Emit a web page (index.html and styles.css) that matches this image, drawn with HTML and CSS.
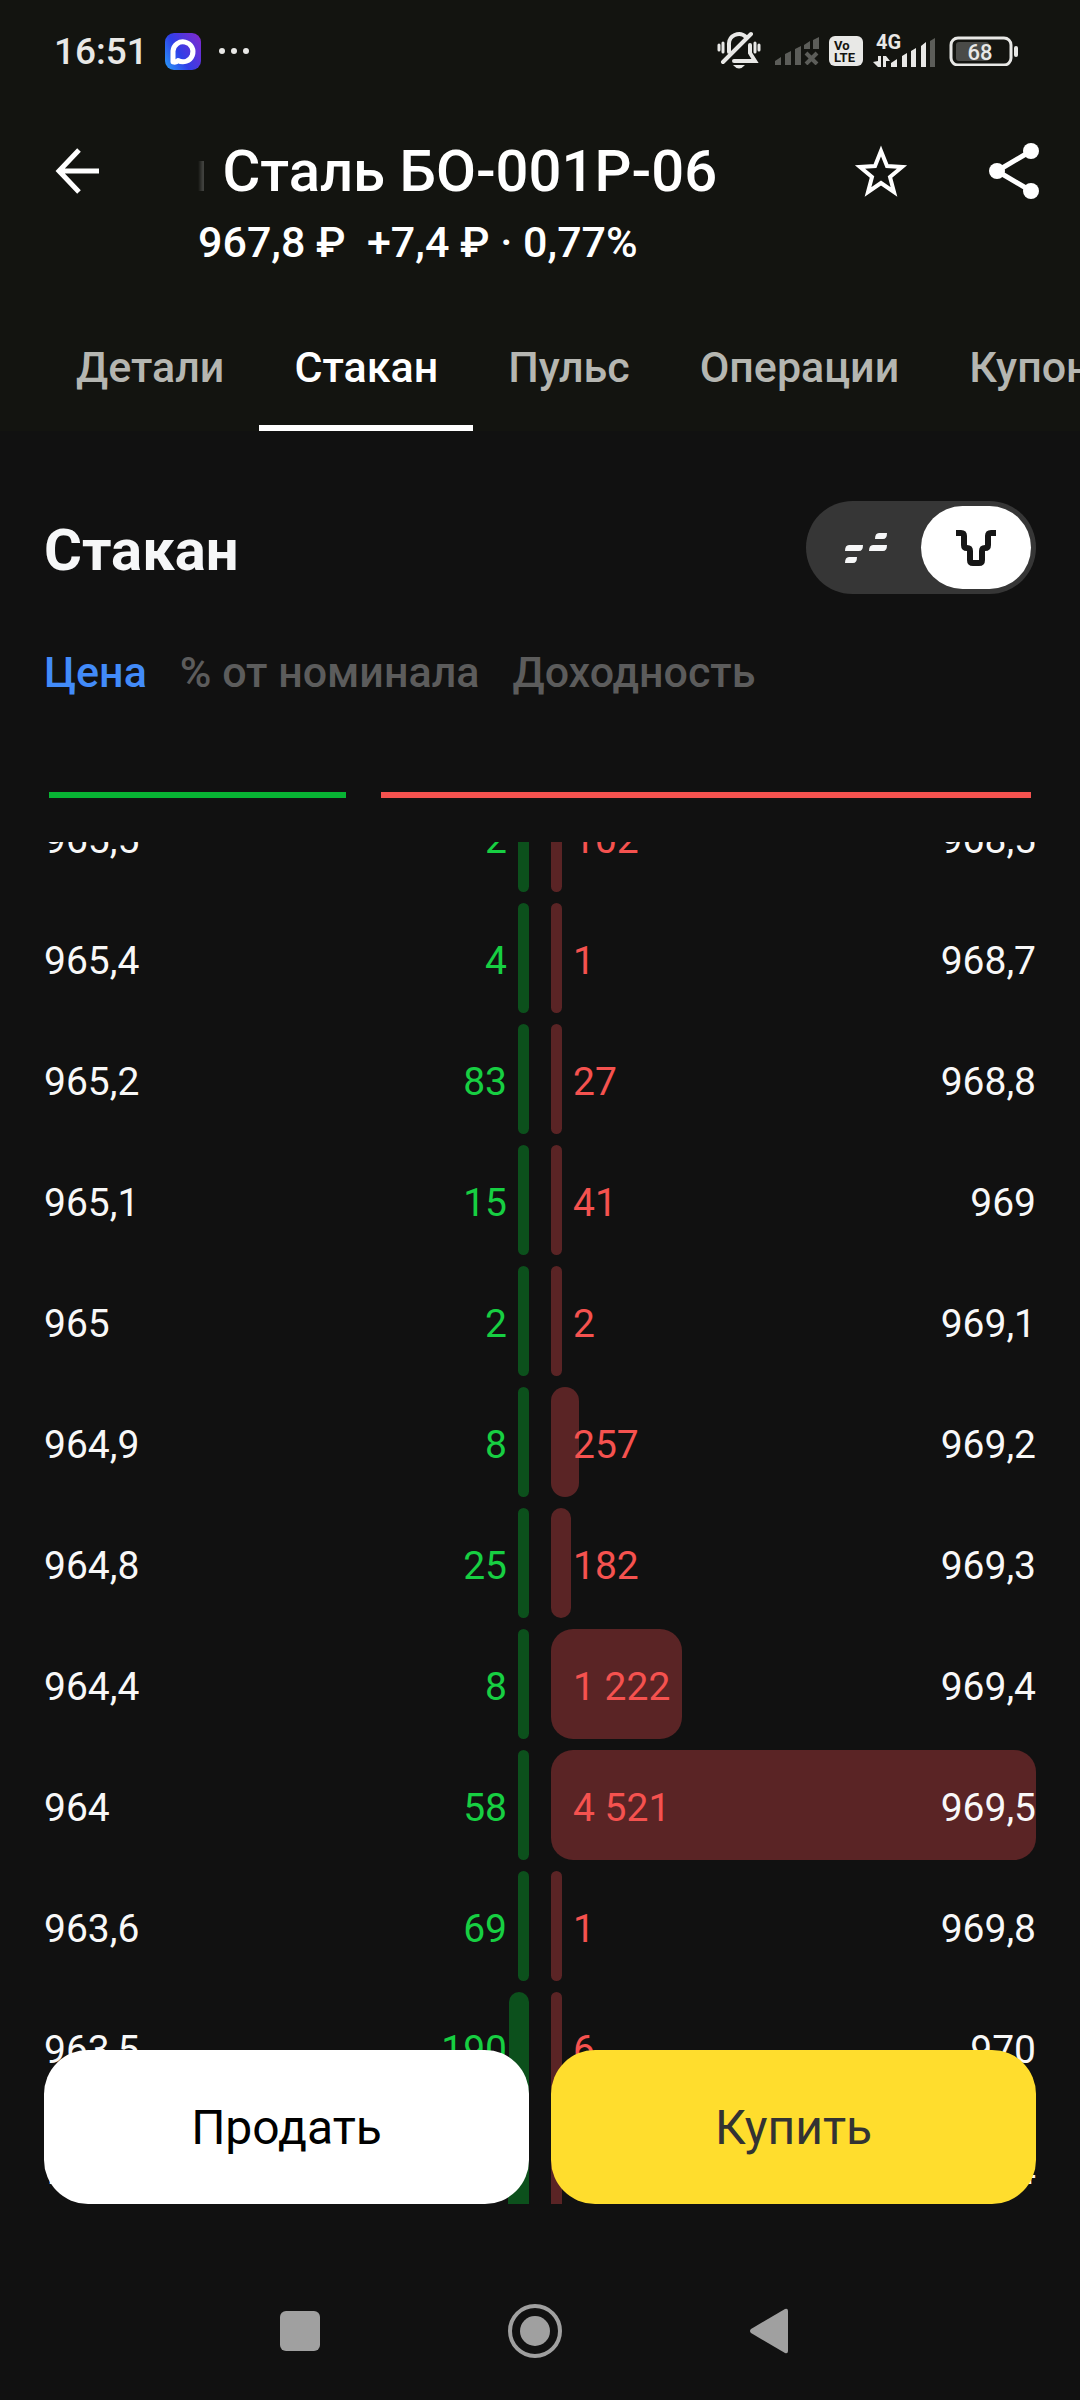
FILE: index.html
```html
<!DOCTYPE html>
<html lang="ru">
<head>
	<meta charset="utf-8">
	<meta name="viewport" content="width=device-width, initial-scale=1.0">
	<title>Стакан</title>
	<link rel="stylesheet" href="styles.css">
</head>
<body>
	<header class="top">
		<div class="status">
			<div class="status-left">
				<span class="clock">16:51</span>
				<svg width="36" height="37" viewBox="0 0 36 37">
					<defs>
						<linearGradient id="app" x1="0" y1="0.8" x2="1" y2="0.2">
							<stop offset="0" stop-color="#2a8df5"/>
							<stop offset="0.4" stop-color="#2f3fe8"/>
							<stop offset="1" stop-color="#7a2bd0"/>
						</linearGradient>
					</defs>
					<rect width="36" height="37" rx="9" fill="url(#app)"/>
					<path d="M8 29V18a10 10 0 1 1 5 9.500q-2 2.500-5 1.500z" fill="none" stroke="#fff" stroke-width="5" stroke-linejoin="round"/>
				</svg>
				<svg width="32" height="8" viewBox="0 0 32 8" fill="#e8e8e6">
					<circle cx="4" cy="4" r="3"/><circle cx="16" cy="4" r="3"/><circle cx="28" cy="4" r="3"/>
				</svg>
			</div>
			<div class="status-right">
				<svg width="44" height="40" viewBox="0 0 44 40" fill="none" stroke="#e8e8e6" stroke-width="4" stroke-linecap="round">
					<path d="M12 21v-7a10 10 0 0 1 17-8M6 31L34 3M17 30h21l-5-8v-8"/>
					<path d="M16 34h12q-6 7-12 0z" fill="#e8e8e6" stroke="none"/>
					<path d="M2 14v5M6 12v9M38 12v9M42 14v5" stroke-width="3"/>
				</svg>
				<div class="signals">
					<svg width="44" height="28" viewBox="0 0 44 28" fill="#5c5d59">
						<path d="M0 28v-4l6-4v8zM10 28V17l6-3v14zM20 28V12l6-3v19zM29 12V8l6-4v8zM38 12V3l6-3v12z"/>
						<path d="M31 16l11 11M42 16L31 27" stroke="#5c5d59" stroke-width="4"/>
					</svg>
					<svg width="34" height="30" viewBox="0 0 34 30">
						<rect width="34" height="30" rx="6" fill="#e8e8e6"/>
						<text class="volte" x="5" y="14">Vo</text>
						<text class="volte" x="5" y="26">LTE</text>
					</svg>
					<svg width="62" height="34" viewBox="0 0 62 34" fill="#e8e8e6">
						<text class="net" x="3" y="15">4G</text>
						<path d="M0 28l5-1v-5h3v11H5zM10 22h3l4 5h-4v6h-3z"/>
						<path d="M18 33v-4l6-4v8zM29 33V22l5-3v14zM38 33V17l5-3v19zM48 33V12l5-4v25z"/>
						<path d="M57 33V7l5-3v29z" fill="#5c5d59"/>
					</svg>
				</div>
				<svg width="69" height="30" viewBox="0 0 69 30">
					<rect x="2" y="2" width="60" height="27" rx="7" fill="none" stroke="#e8e8e6" stroke-width="3"/>
					<rect x="7" y="6" width="33" height="19" rx="3" fill="#4a4b48"/>
					<rect x="65" y="10" width="4" height="11" rx="2" fill="#e8e8e6"/>
					<text class="charge" x="31" y="24" text-anchor="middle">68</text>
				</svg>
			</div>
		</div>

		<div class="appbar">
			<button class="icon-btn" type="button" aria-label="Назад">
				<svg width="44" height="46" viewBox="0 0 44 46" fill="none" stroke="#fff" stroke-width="5">
					<path d="M24 2L4 23l20 21M4 23h40"/>
				</svg>
			</button>
			<div class="name">
				<h1><span class="tail">я</span>&nbsp;Сталь БО-001Р-06</h1>
				<p>967,8 ₽&nbsp; +7,4 ₽ · 0,77%</p>
			</div>
			<button class="icon-btn" type="button" aria-label="В избранное">
				<svg width="54" height="54" viewBox="0 0 54 54" fill="none" stroke="#fff" stroke-width="4">
					<path d="M27 7l6 15 15 1-12 10 4 15-13-9-13 9 4-15L6 23l15-1z"/>
				</svg>
			</button>
			<button class="icon-btn" type="button" aria-label="Поделиться">
				<svg width="50" height="58" viewBox="0 0 50 58" fill="#fff">
					<path d="M42 9L8 29l34 20" fill="none" stroke="#fff" stroke-width="5"/>
					<circle cx="42" cy="9" r="8"/><circle cx="8" cy="29" r="8"/><circle cx="42" cy="49" r="8"/>
				</svg>
			</button>
		</div>

		<nav class="tabs">
			<a href="#details">Детали</a>
			<a href="#book" class="active">Стакан</a>
			<a href="#pulse">Пульс</a>
			<a href="#operations">Операции</a>
			<a href="#coupons">Купоны</a>
		</nav>
	</header>

	<main>
		<div class="section-head">
			<h2>Стакан</h2>
			<div class="toggle">
				<button type="button" aria-label="Шахматный вид">
					<svg width="42" height="30" viewBox="0 0 42 30" fill="#f6f7f8">
						<path d="M34 0h8q0 6-4 6h-8q0-6 4-6zM4 12h14q0 6-4 6H0q0-6 4-6zM28 12h14q0 6-4 6H24q0-6 4-6zM4 24h8q0 6-4 6H0q0-6 4-6z"/>
					</svg>
				</button>
				<button type="button" class="on" aria-label="Симметричный вид">
					<svg width="42" height="36" viewBox="0 0 42 36" fill="none" stroke="#161616" stroke-width="6">
						<path d="M1 3h5q3 0 3 3v9q0 3 3 3t3 3v9q0 3 3 3h6q3 0 3-3v-9q0-3 3-3t3-3V6q0-3 3-3h5"/>
					</svg>
				</button>
			</div>
		</div>

		<div class="modes">
			<button type="button" class="on">Цена</button>
			<button type="button">% от номинала</button>
			<button type="button">Доходность</button>
		</div>

		<div class="ratio">
			<span class="buy" style="flex-grow: 296"></span>
			<span class="sell" style="flex-grow: 649"></span>
		</div>

		<div class="book-wrap">
			<div class="book" id="scroller">
				<table>
					<tbody id="book"></tbody>
				</table>
			</div>
			<div class="deal">
				<button type="button" class="btn-sell">Продать</button>
				<button type="button" class="btn-buy">Купить</button>
			</div>
		</div>
	</main>

	<footer class="sysnav">
		<svg width="40" height="40" viewBox="0 0 40 40"><rect width="40" height="40" rx="6"/></svg>
		<svg width="54" height="54" viewBox="0 0 54 54">
			<circle cx="27" cy="27" r="25" fill="none" stroke="#a0a0a0" stroke-width="4"/>
			<circle cx="27" cy="27" r="15"/>
		</svg>
		<svg width="38" height="46" viewBox="0 0 38 46"><path d="M1 21L35 1q3-1 3 2v40q0 3-3 2L1 25q-2-2 0-4z"/></svg>
	</footer>

	<script type="text/javascript">
	// bid price, bid lots, ask lots, ask price
	var rows = [
		['965,5', 2, 102, '968,5'],
		['965,4', 4, 1, '968,7'],
		['965,2', 83, 27, '968,8'],
		['965,1', 15, 41, '969'],
		['965', 2, 2, '969,1'],
		['964,9', 8, 257, '969,2'],
		['964,8', 25, 182, '969,3'],
		['964,4', 8, 1222, '969,4'],
		['964', 58, 4521, '969,5'],
		['963,6', 69, 1, '969,8'],
		['963,5', 190, 6, '970'],
		['963', 200, 10, '970,4']
	],
	book = document.getElementById('book'),
	max = 0;

	rows.forEach(function(r) {
		max = Math.max(max, r[1], r[2]);
	});

	function format(n) {
		return String(n).replace(/(\d)(\d{3})$/, '$1\u00a0$2');
	}

	function bar(side, n) {
		return '<td class="bar ' + side + '"><div style="width:' + (n / max * 100) + '%"></div></td>';
	}

	book.innerHTML = rows.map(function(r) {
		return '<tr>' + bar('bid', r[1]) + bar('ask', r[2]) +
			'<td class="price">' + r[0] + '</td>' +
			'<td class="lots bid">' + format(r[1]) + '</td>' +
			'<td class="lots ask">' + format(r[2]) + '</td>' +
			'<td class="price right">' + r[3] + '</td></tr>';
	}).join('');

	// start half a row down
	document.getElementById('scroller').scrollTop = 60;
	</script>
</body>
</html>
```
FILE: styles.css
```css
* {
	box-sizing: border-box;
}
body {
	margin: 0;
	height: 100vh;
	display: flex;
	flex-direction: column;
	background: #111111;
	color: #fff;
	font-family: Roboto, "Noto Sans", sans-serif;
	overflow: hidden;
}
h1, h2, p {
	margin: 0;
}
button {
	border: 0;
	padding: 0;
	background: none;
	color: inherit;
	font-family: inherit;
}
svg {
	display: block;
	flex: none;
}

/* top */
.top {
	background: #131410;
}
.status {
	display: flex;
	justify-content: space-between;
	align-items: center;
	height: 102px;
	padding: 0 62px 0 54px;
	color: #e8e8e6;
}
.status-left {
	display: flex;
	align-items: center;
	gap: 17px;
}
.status-right {
	display: flex;
	align-items: center;
	gap: 14px;
}
.signals {
	display: flex;
	align-items: center;
	gap: 10px;
}
.clock {
	font-size: 37px;
	font-weight: 500;
}
.volte {
	font-size: 13px;
	font-weight: 700;
	fill: #131410;
}
.net {
	font-size: 20px;
	font-weight: 700;
}
.charge {
	font-size: 22px;
	font-weight: 500;
	fill: #e8e8e6;
}
.appbar {
	display: flex;
	align-items: flex-start;
	gap: 81px;
	padding: 33px 41px 35px 55px;
}
.icon-btn {
	display: flex;
	align-items: center;
	height: 72px;
}
.name {
	flex: 1;
	margin-left: 18px;
}
.name h1 {
	display: flex;
	font-size: 58px;
	font-weight: 500;
	line-height: 72px;
	white-space: nowrap;
}
/* end of the previous word, scrolled away by the marquee */
.tail {
	display: flex;
	justify-content: flex-end;
	width: 10px;
	overflow: hidden;
	opacity: 0.4;
	-webkit-mask-image: linear-gradient(to right, transparent, #000);
	mask-image: linear-gradient(to right, transparent, #000);
}
.name p {
	margin-top: 9px;
	font-size: 43px;
	font-weight: 500;
	line-height: 52px;
	white-space: nowrap;
}

/* tabs */
.tabs {
	display: flex;
	padding-left: 41px;
	overflow: hidden;
}
.tabs a {
	padding: 0 35px;
	height: 128px;
	border-bottom: 6px solid transparent;
	color: #b5b6b1;
	font-size: 43px;
	font-weight: 500;
	line-height: 128px;
	text-decoration: none;
}
.tabs a.active {
	color: #fff;
	border-color: #fff;
}

/* content */
main {
	flex: 1;
	min-height: 0;
	display: flex;
	flex-direction: column;
	padding: 70px 44px 0;
}
.section-head {
	display: flex;
	justify-content: space-between;
	align-items: center;
}
.section-head h2 {
	padding-top: 4px;
	color: #f6f7f8;
	font-size: 58px;
	font-weight: 700;
}
.toggle {
	display: flex;
	padding: 5px;
	border-radius: 47px;
	background: #363636;
}
.toggle button {
	display: flex;
	align-items: center;
	justify-content: center;
	width: 110px;
	height: 83px;
	border-radius: 42px;
}
.toggle .on {
	background: #fff;
}
.modes {
	display: flex;
	gap: 33px;
	margin-top: 53px;
}
.modes button {
	color: #5c5c5c;
	font-size: 43px;
	font-weight: 500;
	line-height: 50px;
}
.modes .on {
	color: #428bf9;
}
.ratio {
	display: flex;
	gap: 35px;
	margin: 95px 5px 44px;
	height: 6px;
}
.ratio span {
	flex-basis: 0;
}
.ratio .buy {
	background: #08b434;
}
.ratio .sell {
	background: #f5524f;
}

/* order book */
.book-wrap {
	position: relative;
	flex: 1;
	min-height: 0;
}
.book {
	height: 100%;
	overflow-y: auto;
	scrollbar-width: none;
}
.book table, .book tbody {
	display: block;
}
.book tr {
	display: grid;
	grid-template-columns: repeat(4, 1fr);
	column-gap: 22px;
	height: 110px;
	margin-bottom: 11px;
}
.book td {
	grid-row: 1;
	padding: 0;
}
.bar div {
	min-width: 11px;
	height: 110px;
	border-radius: 22px;
}
.bar.bid {
	grid-column: 1 / 3;
}
.bar.ask {
	grid-column: 3 / 5;
}
.bar.bid div {
	margin-left: auto;
	background: #0c501c;
}
.bar.ask div {
	background: #5a2425;
}
.price, .lots {
	font-size: 39px;
	line-height: 116px;
	white-space: nowrap;
}
.price {
	color: #f8f8f8;
	grid-column: 1;
}
.price.right {
	grid-column: 4;
	text-align: right;
}
.book .lots.bid {
	grid-column: 2;
	padding-right: 22px;
	color: #17cf42;
	text-align: right;
}
.book .lots.ask {
	grid-column: 3;
	padding-left: 22px;
	color: #f5524f;
}
.deal {
	position: absolute;
	left: 0;
	right: 0;
	bottom: 0;
	display: flex;
	gap: 22px;
}
.deal button {
	flex: 1;
	height: 154px;
	border-radius: 44px;
	font-size: 48px;
}
.btn-sell {
	background: #fff;
	color: #000;
}
.btn-buy {
	background: #ffdd2d;
	color: #333;
}

/* system buttons */
.sysnav {
	display: flex;
	align-items: center;
	justify-content: center;
	gap: 188px;
	height: 196px;
	padding: 58px 12px 0 0;
	fill: #a0a0a0;
}
```
